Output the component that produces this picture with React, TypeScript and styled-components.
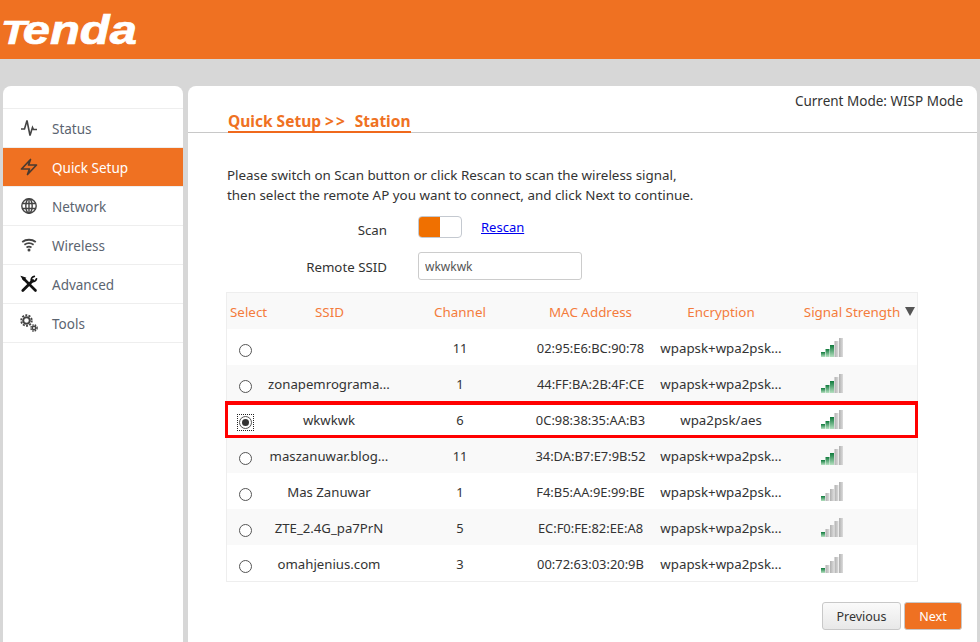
import React from "react";
import styled, { createGlobalStyle } from "styled-components";

const Global = createGlobalStyle`
  html, body { margin: 0; padding: 0; height: 642px; overflow: hidden; background: #d7d7d7; }
  body { font-family: "Noto Sans", "Open Sans", sans-serif; font-size: 13.3px; color: #333; }
  * { box-sizing: border-box; }
`;

const ORANGE = "#ef7122";

const Page = styled.div`
  width: 980px;
  height: 642px;
  display: flex;
  flex-direction: column;
  overflow: hidden;
`;
const Header = styled.header`
  height: 59px;
  flex: none;
  background: ${ORANGE};
  display: flex;
  align-items: flex-start;
  padding: 8px 0 0 2px;
`;
const Body = styled.div`
  flex: 1;
  display: flex;
  gap: 5px;
  padding: 27px 3px 0 3px;
  min-height: 0;
`;
const Sidebar = styled.nav`
  width: 180px;
  flex: none;
  background: #fff;
  border-radius: 8px 8px 0 0;
  padding-top: 22px;
`;
const MenuItem = styled.div<{ $active?: boolean }>`
  height: 39px;
  display: flex;
  align-items: center;
  gap: 14px;
  padding: 2px 0 0 17px;
  border-top: 1px solid #eeeeee;
  background: ${(p) => (p.$active ? ORANGE : "#fff")};
  color: ${(p) => (p.$active ? "#fff" : "#5b6470")};
  font-size: 13.5px;
  &:last-child { height: 40px; border-bottom: 1px solid #eee; }
`;
const IconSlot = styled.span`
  width: 18px;
  height: 18px;
  flex: none;
  display: flex;
  margin-top: -3px;
`;
const Main = styled.main`
  flex: 1;
  background: #fff;
  border-radius: 8px 8px 0 0;
  min-width: 0;
`;
const ModeText = styled.div`
  height: 26px;
  padding: 6px 14px 0 0;
  text-align: right;
  color: #333;
  font-size: 13.5px;
  line-height: 18px;
`;
const TitleBar = styled.div`
  height: 21px;
  border-bottom: 1px solid #c8c8c8;
  padding-left: 40px;
  display: flex;
`;
const Title = styled.div`
  height: 21px;
  border-bottom: 2px solid #f0691c;
  color: ${ORANGE};
  font-weight: 700;
  font-size: 15.5px;
  line-height: 19px;
  white-space: pre;
`;
const TitleSep = styled.span`
  letter-spacing: 2px;
`;
const Intro = styled.p`
  margin: 32px 0 0 39px;
  font-size: 13.4px;
  line-height: 20px;
  color: #333;
`;
const FormRow = styled.div`
  display: flex;
  align-items: center;
  height: 30px;
`;
const FormLabel = styled.label`
  width: 199px;
  text-align: right;
  margin-right: 31px;
  color: #333;
  line-height: 18px;
`;
const Form = styled.div`
  margin-top: 10px;
  display: flex;
  flex-direction: column;
  gap: 7px;
`;
const Toggle = styled.span`
  width: 44px;
  height: 22px;
  border: 1px solid #c4c9d0;
  border-radius: 4px;
  background: #fff;
  overflow: hidden;
  display: block;
  margin-top: -6px;
  &::before {
    content: "";
    display: block;
    width: 21px;
    height: 100%;
    background: #f07000;
  }
`;
const Rescan = styled.a`
  margin: -6px 0 0 19px;
  color: #0000ee;
  text-decoration: underline;
  font-size: 13px;
`;
const SsidInput = styled.input`
  width: 164px;
  height: 28px;
  margin-top: -2px;
  border: 1px solid #ccc;
  border-radius: 3px;
  padding: 0 6px;
  font: 12px "Noto Sans", sans-serif;
  color: #555;
  outline: none;
`;
const Table = styled.div`
  margin: 10px 0 0 38px;
  width: 692px;
  border: 1px solid #eeeeee;
`;
const cols = "37px 131px 130px 131px 130px 131px";
const HeadRow = styled.div`
  display: grid;
  grid-template-columns: ${cols};
  height: 36px;
  padding-top: 2px;
  align-items: center;
  background: #f9f9f9;
  color: #f47c3c;
  font-size: 13.4px;
  text-align: center;
`;
const Row = styled.div<{ $striped: boolean; $picked?: boolean }>`
  display: grid;
  grid-template-columns: ${cols};
  height: 36px;
  align-items: center;
  position: relative;
  z-index: ${(p) => (p.$picked ? 1 : 0)};
  background: ${(p) => (p.$striped ? "#f9f9f9" : "#fff")};
  color: #333;
  font-size: 13.2px;
  text-align: center;
  ${(p) =>
    p.$picked &&
    `&::after {
      content: "";
      position: absolute;
      left: -2px; right: -1px; top: 0; bottom: -1px;
      border-style: solid;
      border-color: #ff0000;
      border-width: 4px 3px 3px;
      pointer-events: none;
    }`}
`;
const SelectHead = styled.span`
  text-align: left;
  padding-left: 3px;
  white-space: nowrap;
`;
const SignalHead = styled.span`
  padding-left: 16px;
  white-space: nowrap;
`;
const RadioCell = styled.span`
  display: flex;
  padding: 6px 0 0 12px;
`;
const RadioBox = styled.span<{ $focus?: boolean }>`
  display: block;
  width: 13px;
  height: 13px;
  ${(p) => p.$focus && `outline: 1px dotted #222; outline-offset: 1px;`}
`;
const Radio = styled.span<{ $on?: boolean }>`
  width: 13px;
  height: 13px;
  border-radius: 50%;
  border: 1px solid #555;
  background: #fff;
  display: block;
  position: relative;
  ${(p) =>
    p.$on &&
    `&::before {
      content: "";
      position: absolute;
      left: 2px; top: 2px;
      width: 7px; height: 7px;
      border-radius: 50%;
      background: #333;
    }`}
`;
const Ssid = styled.span`
  white-space: nowrap;
  overflow: hidden;
  text-overflow: ellipsis;
  padding: 0 5px 0 4px;
  margin-top: 2px;
`;
const Cell = styled.span`
  white-space: nowrap;
  margin-top: 2px;
  font-size: 12.9px;
`;
const EncCell = styled(Cell)`
  font-size: 13.3px;
  overflow: hidden;
  text-overflow: ellipsis;
  padding: 0 3px;
`;
const SignalCell = styled.span`
  display: flex;
  padding-left: 35px;
`;
const Arrow = styled.span`
  display: inline-block;
  margin-left: 5px;
  width: 0;
  height: 0;
  border-left: 5px solid transparent;
  border-right: 5px solid transparent;
  border-top: 9px solid #555;
  vertical-align: 1px;
`;
const Footer = styled.div`
  display: flex;
  justify-content: flex-end;
  gap: 3px;
  margin: 20px 15px 0 0;
`;
const Button = styled.button<{ $primary?: boolean }>`
  height: 28px;
  width: ${(p) => (p.$primary ? "58px" : "79px")};
  border: 1px solid #c8c8c8;
  border-radius: 3px;
  font: 12.5px "Noto Sans", sans-serif;
  padding: 0;
  color: ${(p) => (p.$primary ? "#fff" : "#333")};
  background: ${(p) => (p.$primary ? ORANGE : "linear-gradient(#fafafa, #e8e8e8)")};
`;

const Logo = () => (
  <svg width="138" height="44" viewBox="0 0 138 44">
    <text
      x="-1"
      y="36"
      fill="#fff"
      stroke="#fff"
      strokeWidth="0.7"
      fontFamily="Liberation Sans"
      fontWeight="700"
      fontStyle="italic"
      fontSize="40"
      textLength="136"
      lengthAdjust="spacingAndGlyphs"
    >
      <tspan fontSize="34">T</tspan>
      <tspan dx="-3">enda</tspan>
    </text>
  </svg>
);

const Pulse = () => (
  <svg width="18" height="18" viewBox="0 0 18 18" fill="none" stroke="#444" strokeWidth="1.600">
    <path d="M1 10h3.500l2.500-8.500 3 15 2.500-8 1 2H17" />
  </svg>
);
const Bolt = () => (
  <svg width="18" height="18" viewBox="0 0 18 18" fill="none" stroke="#4a3a30" strokeWidth="1.700" strokeLinejoin="round">
    <path d="M10.500 1.500 8.500 7H16.500L7.500 16.500 9.500 11H1.500Z" />
  </svg>
);
const Globe = () => (
  <svg width="18" height="18" viewBox="0 0 18 18" fill="none" stroke="#444" strokeWidth="1.400">
    <circle cx="9" cy="9" r="7.200" />
    <ellipse cx="9" cy="9" rx="3.200" ry="7.200" />
    <path d="M9 2v14M2 6.500h14M2 11.500h14" />
  </svg>
);
const Wifi = () => (
  <svg width="18" height="18" viewBox="0 0 18 18" fill="none" stroke="#444" strokeWidth="1.800">
    <path d="M2.200 6c4-3 9.600-3 13.600 0M4.400 8.800c2.800-2 6.400-2 9.200 0M6.500 11.400c1.500-1 3.500-1 5 0" />
    <circle cx="9" cy="14" r="1.500" fill="#444" stroke="none" />
  </svg>
);
const Wrench = () => (
  <svg width="18" height="18" viewBox="0 0 18 18" fill="none" stroke="#111" strokeLinecap="round">
    <path d="M3.500 3.500 15.500 15.500" strokeWidth="2.600" />
    <path d="M2 2l3 1-1.500 1.500z" strokeWidth="1.500" />
    <path d="M2.800 15.500 12.800 5.500" strokeWidth="2.800" />
    <path d="M16.500 3.800a3.600 3.600 0 0 1-5 2.500M11.500 6.300a3.600 3.600 0 0 1 2.800-5" strokeWidth="1.700" />
  </svg>
);
const Gears = () => (
  <svg width="18" height="18" viewBox="0 0 18 18" fill="none" stroke="#444">
    <circle cx="6.500" cy="6.500" r="3.300" strokeWidth="2" />
    <circle cx="6.500" cy="6.500" r="5.300" strokeWidth="1.800" strokeDasharray="2 1.300" />
    <circle cx="14" cy="14" r="1.700" strokeWidth="1.500" />
    <circle cx="14" cy="14" r="3.100" strokeWidth="1.400" strokeDasharray="1.500 1" />
  </svg>
);

const Signal = ({ level }: { level: number }) => {
  const hs = [5, 8, 12, 16, 19];
  return (
    <svg width="22" height="19" viewBox="0 0 22 19">
      <defs>
        <linearGradient id="green" x1="0" y1="0" x2="0" y2="1">
          <stop offset="0" stopColor="#0f7a3c" />
          <stop offset="1" stopColor="#b5e0c0" />
        </linearGradient>
        <linearGradient id="grey" x1="0" y1="0" x2="1" y2="0">
          <stop offset="0" stopColor="#b0b0b0" />
          <stop offset="1" stopColor="#dcdcdc" />
        </linearGradient>
      </defs>
      {hs.map((h, i) => (
        <rect
          key={i}
          x={i * 4.500}
          y={19 - h}
          width={4}
          height={h}
          fill={i < level ? "url(#green)" : "url(#grey)"}
        />
      ))}
    </svg>
  );
};

const menu = [
  { label: "Status", icon: <Pulse /> },
  { label: "Quick Setup", icon: <Bolt />, active: true },
  { label: "Network", icon: <Globe /> },
  { label: "Wireless", icon: <Wifi /> },
  { label: "Advanced", icon: <Wrench /> },
  { label: "Tools", icon: <Gears /> },
];

const rows = [
  { ssid: "", ch: "11", mac: "02:95:E6:BC:90:78", enc: "wpapsk+wpa2psk...", sig: 3 },
  { ssid: "zonapemrograma...", ch: "1", mac: "44:FF:BA:2B:4F:CE", enc: "wpapsk+wpa2psk...", sig: 3 },
  { ssid: "wkwkwk", ch: "6", mac: "0C:98:38:35:AA:B3", enc: "wpa2psk/aes", sig: 3, picked: true },
  { ssid: "maszanuwar.blog...", ch: "11", mac: "34:DA:B7:E7:9B:52", enc: "wpapsk+wpa2psk...", sig: 3 },
  { ssid: "Mas Zanuwar", ch: "1", mac: "F4:B5:AA:9E:99:BE", enc: "wpapsk+wpa2psk...", sig: 1 },
  { ssid: "ZTE_2.4G_pa7PrN", ch: "5", mac: "EC:F0:FE:82:EE:A8", enc: "wpapsk+wpa2psk...", sig: 1 },
  { ssid: "omahjenius.com", ch: "3", mac: "00:72:63:03:20:9B", enc: "wpapsk+wpa2psk...", sig: 1 },
];

export default function App() {
  return (
    <Page>
      <Global />
      <Header>
        <Logo />
      </Header>
      <Body>
        <Sidebar>
          {menu.map((m) => (
            <MenuItem key={m.label} $active={m.active}>
              <IconSlot>{m.icon}</IconSlot>
              {m.label}
            </MenuItem>
          ))}
        </Sidebar>
        <Main>
          <ModeText>Current Mode: WISP Mode</ModeText>
          <TitleBar>
            <Title>
              {"Quick Setup "}
              <TitleSep>{">>"}</TitleSep>
              {"  Station"}
            </Title>
          </TitleBar>
          <Intro>
            Please switch on Scan button or click Rescan to scan the wireless signal,
            <br />
            then select the remote AP you want to connect, and click Next to continue.
          </Intro>
          <Form>
            <FormRow>
              <FormLabel>Scan</FormLabel>
              <Toggle />
              <Rescan href="#">Rescan</Rescan>
            </FormRow>
            <FormRow>
              <FormLabel>Remote SSID</FormLabel>
              <SsidInput defaultValue="wkwkwk" />
            </FormRow>
          </Form>
          <Table>
            <HeadRow>
              <SelectHead>Select</SelectHead>
              <span>SSID</span>
              <span>Channel</span>
              <span>MAC Address</span>
              <span>Encryption</span>
              <SignalHead>
                Signal Strength
                <Arrow />
              </SignalHead>
            </HeadRow>
            {rows.map((r, i) => (
              <Row key={r.mac} $striped={i % 2 === 1} $picked={r.picked}>
                <RadioCell>
                  <RadioBox $focus={r.picked}>
                    <Radio $on={r.picked} />
                  </RadioBox>
                </RadioCell>
                <Ssid>{r.ssid}</Ssid>
                <Cell>{r.ch}</Cell>
                <Cell>{r.mac}</Cell>
                <EncCell>{r.enc}</EncCell>
                <SignalCell>
                  <Signal level={r.sig} />
                </SignalCell>
              </Row>
            ))}
          </Table>
          <Footer>
            <Button>Previous</Button>
            <Button $primary>Next</Button>
          </Footer>
        </Main>
      </Body>
    </Page>
  );
}
